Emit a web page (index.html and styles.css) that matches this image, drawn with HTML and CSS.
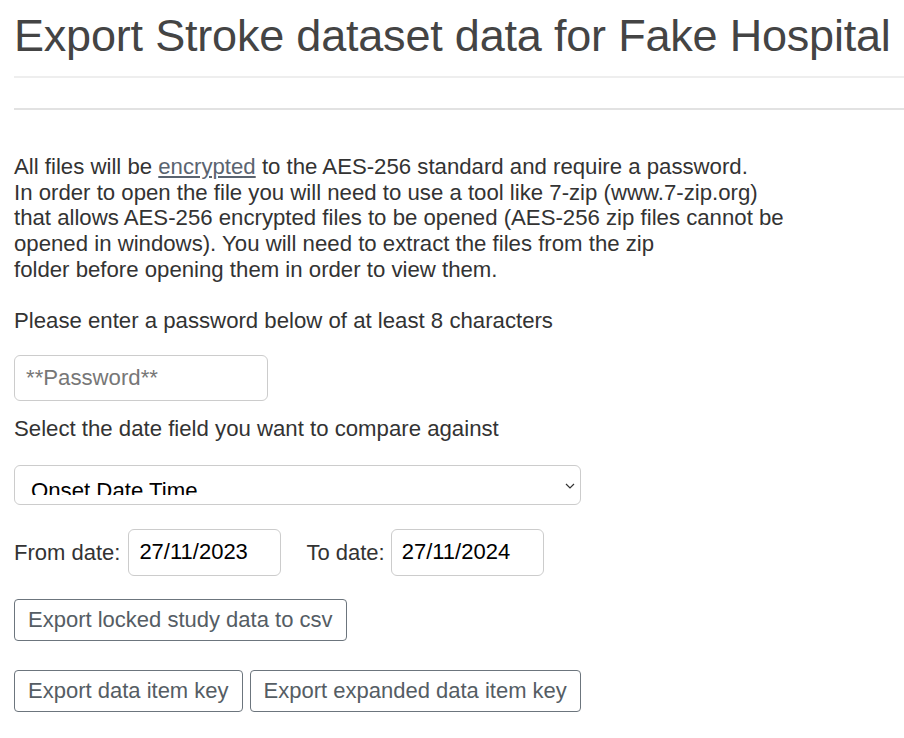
FILE: index.html
```html
<!DOCTYPE html>
<html lang="en">
<head>
  <meta charset="UTF-8"/>
  <title>Export Stroke dataset data</title>
  <link rel="stylesheet" href="styles.css">
</head>
<body>
<div class="page">
  <h1>Export Stroke dataset data for Fake Hospital</h1>
  <hr class="rule-light">
  <hr class="rule">

  <!-- Info -->
  <p class="info">
    All files will be <a href="#">encrypted</a> to the AES-256 standard and require a password.<br>
    In order to open the file you will need to use a tool like 7-zip (www.7-zip.org)<br>
    that allows AES-256 encrypted files to be opened (AES-256 zip files cannot be<br>
    opened in windows). You will need to extract the files from the zip<br>
    folder before opening them in order to view them.
  </p>

  <p class="info">Please enter a password below of at least 8 characters</p>

  <form class="export-form">
    <input class="field password" type="password" placeholder="**Password**">

    <label class="info">Select the date field you want to compare against</label>

    <div class="select">
      <span class="select-value">Onset Date Time</span>
      <svg class="chevron" width="10" height="6" viewBox="0 0 10 6"><path d="M1 1l4 4 4-4" fill="none" stroke="#333" stroke-width="1.2"/></svg>
    </div>

    <div class="dates">
      <label>From date:</label>
      <input class="field date" type="text" value="27/11/2023">
      <label class="to">To date:</label>
      <input class="field date" type="text" value="27/11/2024">
    </div>

    <div class="actions">
      <button type="button" class="btn">Export locked study data to csv</button>
    </div>
    <div class="actions">
      <button type="button" class="btn">Export data item key</button>
      <button type="button" class="btn">Export expanded data item key</button>
    </div>
  </form>
</div>
</body>
</html>
```

FILE: styles.css
```css
*{box-sizing:border-box}
body{margin:0;background:#fff;color:#333;font-family:"Liberation Sans",Arial,Helvetica,sans-serif;font-size:22.2px;line-height:25.7px}
.page{padding:0 0 0 14px}

h1{margin:0;padding-top:12px;font-size:45px;font-weight:300;line-height:48px;color:#444;letter-spacing:-.2px}
hr{border:0;margin:0}
.rule-light{border-top:2px solid #eee;margin-top:16px}
.rule{border-top:2px solid #e2e2e2;margin-top:30px}

.info{margin:0}
p.info{margin-top:44px}
p.info + p.info{margin-top:25px}
.info a{color:#5a6470;text-decoration:underline}

.export-form{display:flex;flex-direction:column;align-items:flex-start}
.field{font:inherit;color:#000;border:1px solid #ccc;border-radius:6px;background:#fff;outline:none}
.field::placeholder{color:#777}
.password{width:254px;height:46px;padding:0 11px;margin-top:22px}
label.info{margin-top:15px}

.select{position:relative;width:567px;height:40px;margin-top:23px;border:1px solid #ccc;border-radius:6px;padding:0 16px;color:#000}
.select-value{display:block;height:29px;overflow:hidden;padding-top:12px;line-height:26px}
.chevron{position:absolute;right:5px;top:17px}

.dates{display:flex;align-items:center;margin-top:24px;font-size:22px}
.dates label{margin-right:8px}
.dates .to{margin-left:25px;margin-right:6px}
.date{width:153px;height:47px;padding:0 10px}

.actions{display:flex;gap:7px;margin-top:23px}
.actions + .actions{margin-top:29px}
.btn{font:inherit;font-size:22px;color:#555d64;background:#fff;border:1px solid #6c757d;border-radius:4px;height:42px;padding:0 13px;cursor:pointer}
```
